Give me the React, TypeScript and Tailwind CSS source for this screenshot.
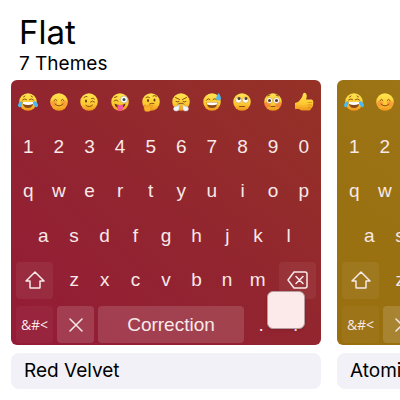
import { useId } from "react";
import type { ReactNode } from "react";

type EmojiName =
  | "joy" | "blush" | "wink" | "zany" | "thinking"
  | "triumph" | "sweat" | "rolling" | "flushed" | "thumb";

const EMOJI: EmojiName[] = [
  "joy", "blush", "wink", "zany", "thinking",
  "triumph", "sweat", "rolling", "flushed", "thumb",
];

const ink = { fill: "none", stroke: "#7a450f", strokeWidth: 1.8, strokeLinecap: "round" as const };

const FEATURES: Record<Exclude<EmojiName, "thumb">, ReactNode> = {
  joy: (
    <>
      <path d="M7 14q4-4 8-1M21 13q4-3 8 1M9 8l3-2M27 8l-3-2" {...ink} />
      <path d="M7 18h22q-1 12-11 12T7 18z" fill="#8a4a1c" />
      <path d="M8 18h20v4q-10 4-20 0z" fill="#fff" />
      <path d="M6 16q-8 3-8 9 1 5 5 3 5-3 3-12zM30 16q8 3 8 9-1 5-5 3-5-3-3-12z" fill="#4cb9f2" />
    </>
  ),
  blush: (
    <>
      <circle cx="8" cy="21" r="6" fill="#f77a3b" opacity=".5" />
      <circle cx="28" cy="21" r="6" fill="#f77a3b" opacity=".5" />
      <path d="M8 15q3-5 6 0M22 15q3-5 6 0M10 22q8 8 16 0" {...ink} />
    </>
  ),
  wink: (
    <>
      <path d="M8 9q3-3 6-2M23 11q4-2 6 1M21 18q4-4 8 0M12 25q7 5 13-1" {...ink} />
      <ellipse cx="12" cy="16" rx="2" ry="3" fill="#6b3a0c" />
    </>
  ),
  zany: (
    <>
      <path d="M6 16q4-5 8 0M7 9l5-2" {...ink} />
      <circle cx="26" cy="13" r="7" fill="#fff" stroke="#9c8b70" strokeWidth="1" />
      <circle cx="26" cy="13" r="3" fill="#38485a" />
      <path d="M7 21q11 6 22 0-1 9-11 9T7 21z" fill="#6b3413" />
      <path d="M13 24h11v7q-1 5-6 5t-5-5z" fill="#f4579b" />
    </>
  ),
  thinking: (
    <>
      <path d="M8 9q4-3 7 0M22 6q4-3 7 1M15 22q5-3 9-1" {...ink} />
      <ellipse cx="12" cy="15" rx="2" ry="3" fill="#6b3a0c" />
      <ellipse cx="25" cy="14" rx="2" ry="3" fill="#6b3a0c" />
      <path d="M5 24q3-1 5 3l11-3q3 1 0 3l-5 2q5 2 2 5-3 4-9 3-5-1-5-6z" fill="#f9b02a" stroke="#d9861a" strokeWidth="1" />
    </>
  ),
  triumph: (
    <>
      <path d="M7 9l8 4M29 9l-8 4M8 17q3 2 6 0M22 17q3 2 6 0M12 22q6-4 12 0" {...ink} />
      <path d="M14 23q-2 4-6 4-5 0-5 5 0 4 5 4 5 1 6-4zM22 23q2 4 6 4 5 0 5 5 0 4-5 4-5 1-6-4z" fill="#f3f7fb" stroke="#b7c7d6" strokeWidth="1" />
    </>
  ),
  sweat: (
    <>
      <path d="M7 14q4-5 7-1M20 13q4-4 7 0" {...ink} />
      <path d="M7 19h22q-1 11-11 11T7 19z" fill="#8a4a1c" />
      <path d="M8 19h20v4q-10 3-20 0z" fill="#fff" />
      <path d="M31 0q7 9 4 13-4 4-8 0-2-5 4-13z" fill="#4cb9f2" />
    </>
  ),
  rolling: (
    <>
      <circle cx="11" cy="14" r="6" fill="#fff" stroke="#c58a20" strokeWidth="1" />
      <circle cx="25" cy="14" r="6" fill="#fff" stroke="#c58a20" strokeWidth="1" />
      <circle cx="12" cy="11" r="3" fill="#5b3b20" />
      <circle cx="26" cy="11" r="3" fill="#5b3b20" />
      <path d="M13 27h10" {...ink} />
    </>
  ),
  flushed: (
    <>
      <circle cx="7" cy="23" r="6" fill="#f4693b" opacity=".6" />
      <circle cx="29" cy="23" r="6" fill="#f4693b" opacity=".6" />
      <path d="M7 6l5-2M29 6l-5-2M14 27h8" {...ink} />
      <circle cx="11" cy="15" r="6" fill="#fff" stroke="#c58a20" strokeWidth="1" />
      <circle cx="25" cy="15" r="6" fill="#fff" stroke="#c58a20" strokeWidth="1" />
      <circle cx="11" cy="15" r="3" fill="#5b3b20" />
      <circle cx="25" cy="15" r="3" fill="#5b3b20" />
    </>
  ),
};

function Emoji({ name }: { name: EmojiName }) {
  const id = useId();
  return (
    <svg viewBox="0 0 36 36" className="size-[18px] overflow-visible" aria-hidden="true">
      <defs>
        <linearGradient id={id} x1="0" y1="0" x2="0" y2="1">
          <stop offset="0" stopColor="#ffe551" />
          <stop offset=".6" stopColor="#fdc932" />
          <stop offset="1" stopColor="#ef931b" />
        </linearGradient>
      </defs>
      {name === "thumb" ? (
        <>
          <path
            d="M0 20q7-1 10-6 5-5 6-12 2-4 6-1 3 4 0 12h11q4 1 3 4 2 2 0 5 1 3-1 5 0 3-3 4 0 4-4 4H16q-5 0-8-3H0z"
            fill={`url(#${id})`}
          />
          <path d="M25 19h9M25 24h9M25 29h7" fill="none" stroke="#d88a16" strokeWidth="1.5" />
        </>
      ) : (
        <>
          <circle cx="18" cy="18" r="17.5" fill={`url(#${id})`} />
          {FEATURES[name]}
        </>
      )}
    </svg>
  );
}

function Key({ children, label }: { children: ReactNode; label?: string }) {
  return (
    <button type="button" aria-label={label} className="flex h-full w-full items-center justify-center">
      {children}
    </button>
  );
}

const capKey = "flex h-[37px] items-center justify-center rounded";

function Keyboard({ gradient, pressed }: { gradient: string; pressed?: boolean }) {
  return (
    <div className={`relative h-[265px] overflow-hidden rounded-md ${gradient}`}>
      <div className="grid h-[267px] grid-rows-6 font-['Liberation_Sans',Arial,sans-serif] text-[19px] leading-6 text-[#f8e9e8]">
        <div className="grid grid-cols-10 px-0.5">
          {EMOJI.map((name) => (
            <Key key={name} label={name}><Emoji name={name} /></Key>
          ))}
        </div>
        <div className="grid grid-cols-10 px-0.5">
          {[..."1234567890"].map((k) => <Key key={k}>{k}</Key>)}
        </div>
        <div className="grid grid-cols-10 px-0.5">
          {[..."qwertyuiop"].map((k) => <Key key={k}>{k}</Key>)}
        </div>
        <div className="grid grid-cols-9 px-[17px]">
          {[..."asdfghjkl"].map((k) => <Key key={k}>{k}</Key>)}
        </div>
        <div className="flex items-center px-[5px]">
          <button type="button" aria-label="Shift" className={`${capKey} w-[37px] bg-white/6`}>
            <svg viewBox="0 0 20 18" className="h-[18px] w-5" fill="none" stroke="currentColor" strokeWidth="1.5" strokeLinejoin="round">
              <path d="M10 1l9 9h-4v6.500q0 .5-.5.5h-9q-.5 0-.5-.5V10H1z" />
            </svg>
          </button>
          <div className="grid h-full flex-1 grid-cols-7 px-[6px]">
            {[..."zxcvbnm"].map((k) => <Key key={k}>{k}</Key>)}
          </div>
          <button type="button" aria-label="Delete" className={`${capKey} w-[37px] bg-white/6`}>
            <svg viewBox="0 0 21 18" className="h-[18px] w-[21px]" fill="none" stroke="currentColor" strokeWidth="1.5" strokeLinecap="round" strokeLinejoin="round">
              <path d="M7 1h11q2 0 2 2v12q0 2-2 2H7L1 9zM9 5.500l7 7M16 5.500l-7 7" />
            </svg>
          </button>
        </div>
        <div className="flex items-center pr-2 pl-[5px]">
          <button type="button" className={`${capKey} w-[37px] bg-white/4 font-['Open_Sans',sans-serif] text-sm`}>
            &amp;#&lt;
          </button>
          <button type="button" aria-label="Close" className={`${capKey} mx-1 w-[37px] bg-white/14`}>
            <svg viewBox="0 0 14 14" className="size-3.5" fill="none" stroke="currentColor" strokeWidth="1.5" strokeLinecap="round">
              <path d="M1 1l12 12M13 1L1 13" />
            </svg>
          </button>
          <button type="button" className={`${capKey} w-[146px] bg-white/14`}>Correction</button>
          <div className="grid h-full flex-1 grid-cols-2">
            <Key>.</Key>
            <Key>.</Key>
          </div>
        </div>
      </div>
      {pressed && (
        <div className="absolute right-4 bottom-4 size-[38px] rounded-md border border-[#b69c9e] bg-[#fceaeb] shadow-sm" />
      )}
    </div>
  );
}

const THEMES = [
  { name: "Red Velvet", gradient: "bg-linear-to-tr from-[#941b37] via-[#92252f] to-[#953226]", pressed: true },
  { name: "Atomic", gradient: "bg-linear-to-tr from-[#996f0e] via-[#9b7314] to-[#a57e1b]", pressed: false },
];

export default function App() {
  return (
    <main className="w-full overflow-hidden bg-white pt-3 pb-3 font-['Inter',sans-serif] text-black">
      <header className="px-[19px]">
        <h1 className="text-[33px] leading-10">Flat</h1>
        <p className="text-[19px] leading-6">7 Themes</p>
      </header>
      <section className="mt-1 flex gap-4 pl-[11px]" aria-label="Flat themes">
        {THEMES.map((theme) => (
          <article key={theme.name} className="w-[310px] shrink-0">
            <Keyboard gradient={theme.gradient} pressed={theme.pressed} />
            <h2 className="mt-2 rounded-lg bg-[#f2f1f7] px-[13px] py-1.5 text-[19px] leading-6">
              {theme.name}
            </h2>
          </article>
        ))}
      </section>
    </main>
  );
}
